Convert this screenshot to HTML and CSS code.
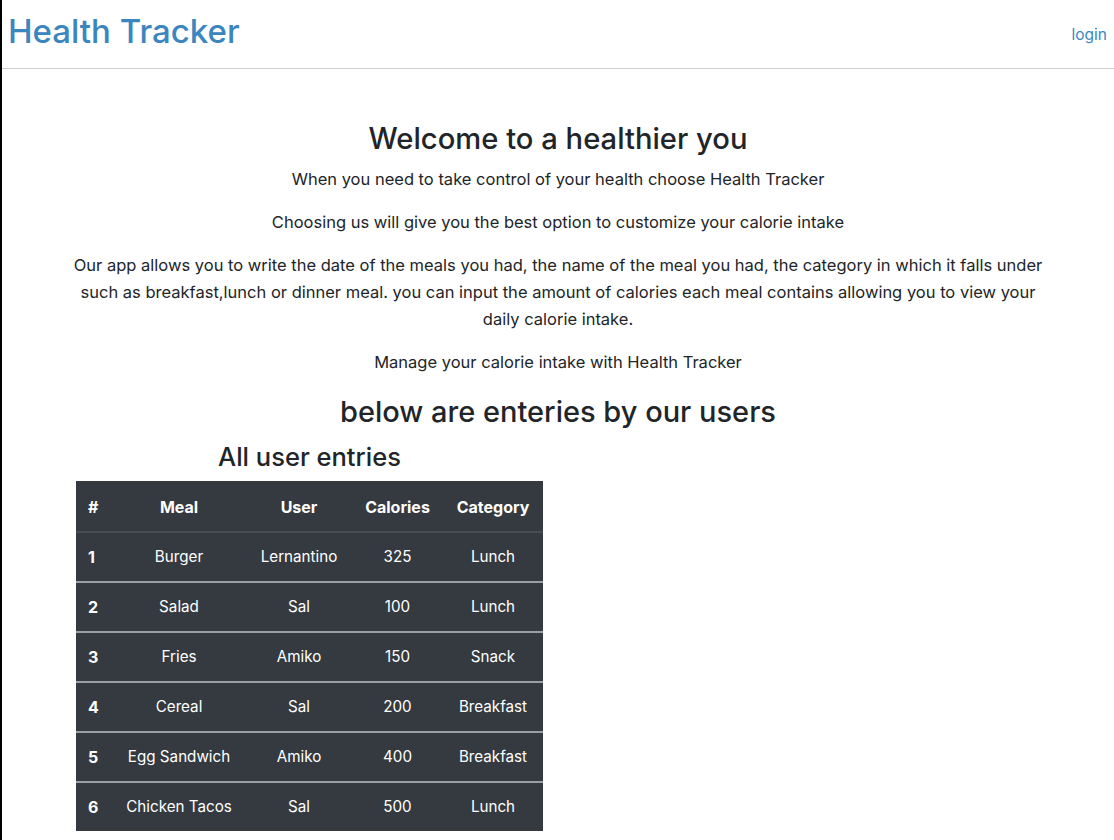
FILE: index.html
```html
<!DOCTYPE html>
<html lang="en">
<head>
<meta charset="utf-8">
<title>Health Tracker</title>
<link rel="stylesheet" href="styles.css">
</head>
<body>
<header class="topbar">
  <a class="brand" href="#">Health Tracker</a>
  <a class="login" href="#">login</a>
</header>
<main class="main">
  <section class="intro">
    <h1 class="title">Welcome to a healthier you</h1>
    <p>When you need to take control of your health choose Health Tracker</p>
    <p>Choosing us will give you the best option to customize your calorie intake</p>
    <p>Our app allows you to write the date of the meals you had, the name of the meal you had, the category in which it falls under such as breakfast,lunch or dinner meal. you can input the amount of calories each meal contains allowing you to view your daily calorie intake.</p>
    <p>Manage your calorie intake with Health Tracker</p>
    <h2 class="subtitle">below are enteries by our users</h2>
  </section>
  <section class="entries">
    <h3 class="entries-title">All user entries</h3>
    <table class="table">
      <thead>
        <tr><th class="c-num">#</th><th class="c-meal">Meal</th><th class="c-user">User</th><th class="c-cal">Calories</th><th class="c-cat">Category</th></tr>
      </thead>
      <tbody>
        <tr><th class="c-num">1</th><td>Burger</td><td>Lernantino</td><td>325</td><td>Lunch</td></tr>
        <tr><th class="c-num">2</th><td>Salad</td><td>Sal</td><td>100</td><td>Lunch</td></tr>
        <tr><th class="c-num">3</th><td>Fries</td><td>Amiko</td><td>150</td><td>Snack</td></tr>
        <tr><th class="c-num">4</th><td>Cereal</td><td>Sal</td><td>200</td><td>Breakfast</td></tr>
        <tr><th class="c-num">5</th><td>Egg Sandwich</td><td>Amiko</td><td>400</td><td>Breakfast</td></tr>
        <tr><th class="c-num">6</th><td>Chicken Tacos</td><td>Sal</td><td>500</td><td>Lunch</td></tr>
      </tbody>
    </table>
  </section>
</main>
</body>
</html>
```
FILE: styles.css
```css
html, body {
  margin: 0;
  padding: 0;
}
body {
  min-height: 100vh;
  box-sizing: border-box;
  border-left: 2px solid #000;
  font-family: Inter, "Liberation Sans", sans-serif;
  color: #212529;
  background: #fff;
  font-size: 16.5px;
  line-height: 27px;
}
.topbar {
  height: 68px;
  border-bottom: 1px solid #cfcfcf;
  display: flex;
  align-items: center;
  justify-content: space-between;
  padding: 0 7px 0 6px;
}
.brand {
  color: #3b86be;
  text-decoration: none;
  font-size: 33px;
  font-weight: 500;
  line-height: 40px;
  margin-top: -6px;
}
.login {
  color: #3b86be;
  text-decoration: none;
  font-size: 15.5px;
}
.main {
  padding-top: 53px;
}
.intro {
  text-align: center;
  padding: 0 63px;
}
.title {
  font-size: 29.2px;
  font-weight: 500;
  line-height: 34px;
  margin: 0 0 10px;
}
.intro p {
  margin: 0 0 16px;
}
.subtitle {
  font-size: 29px;
  font-weight: 500;
  line-height: 34px;
  margin: 19px 0 12px;
}
.entries {
  width: 467px;
  margin-left: 74px;
}
.entries-title {
  text-align: center;
  font-size: 25.5px;
  font-weight: 500;
  line-height: 32px;
  margin: 0 0 8px;
}
.table {
  width: 467px;
  border-collapse: collapse;
  background: #343a40;
  color: #fff;
  font-size: 15.2px;
  line-height: 24px;
}
.table th, .table td {
  height: 48px;
  padding: 0 12px;
  text-align: center;
  vertical-align: middle;
  white-space: nowrap;
  border-top: 2px solid #9a9fa5;
}
.table th {
  font-size: 16px;
  font-weight: 700;
}
.table thead th {
  border-top-color: #343a40;
}
.table tbody tr:first-child th, .table tbody tr:first-child td {
  border-top-color: #454d55;
}
.table .c-num {
  text-align: left;
  width: 12px;
}
.c-meal { width: 110px; }
.c-user { width: 82px; }
.c-cal { width: 67px; }
.c-cat { width: 76px; }
```
